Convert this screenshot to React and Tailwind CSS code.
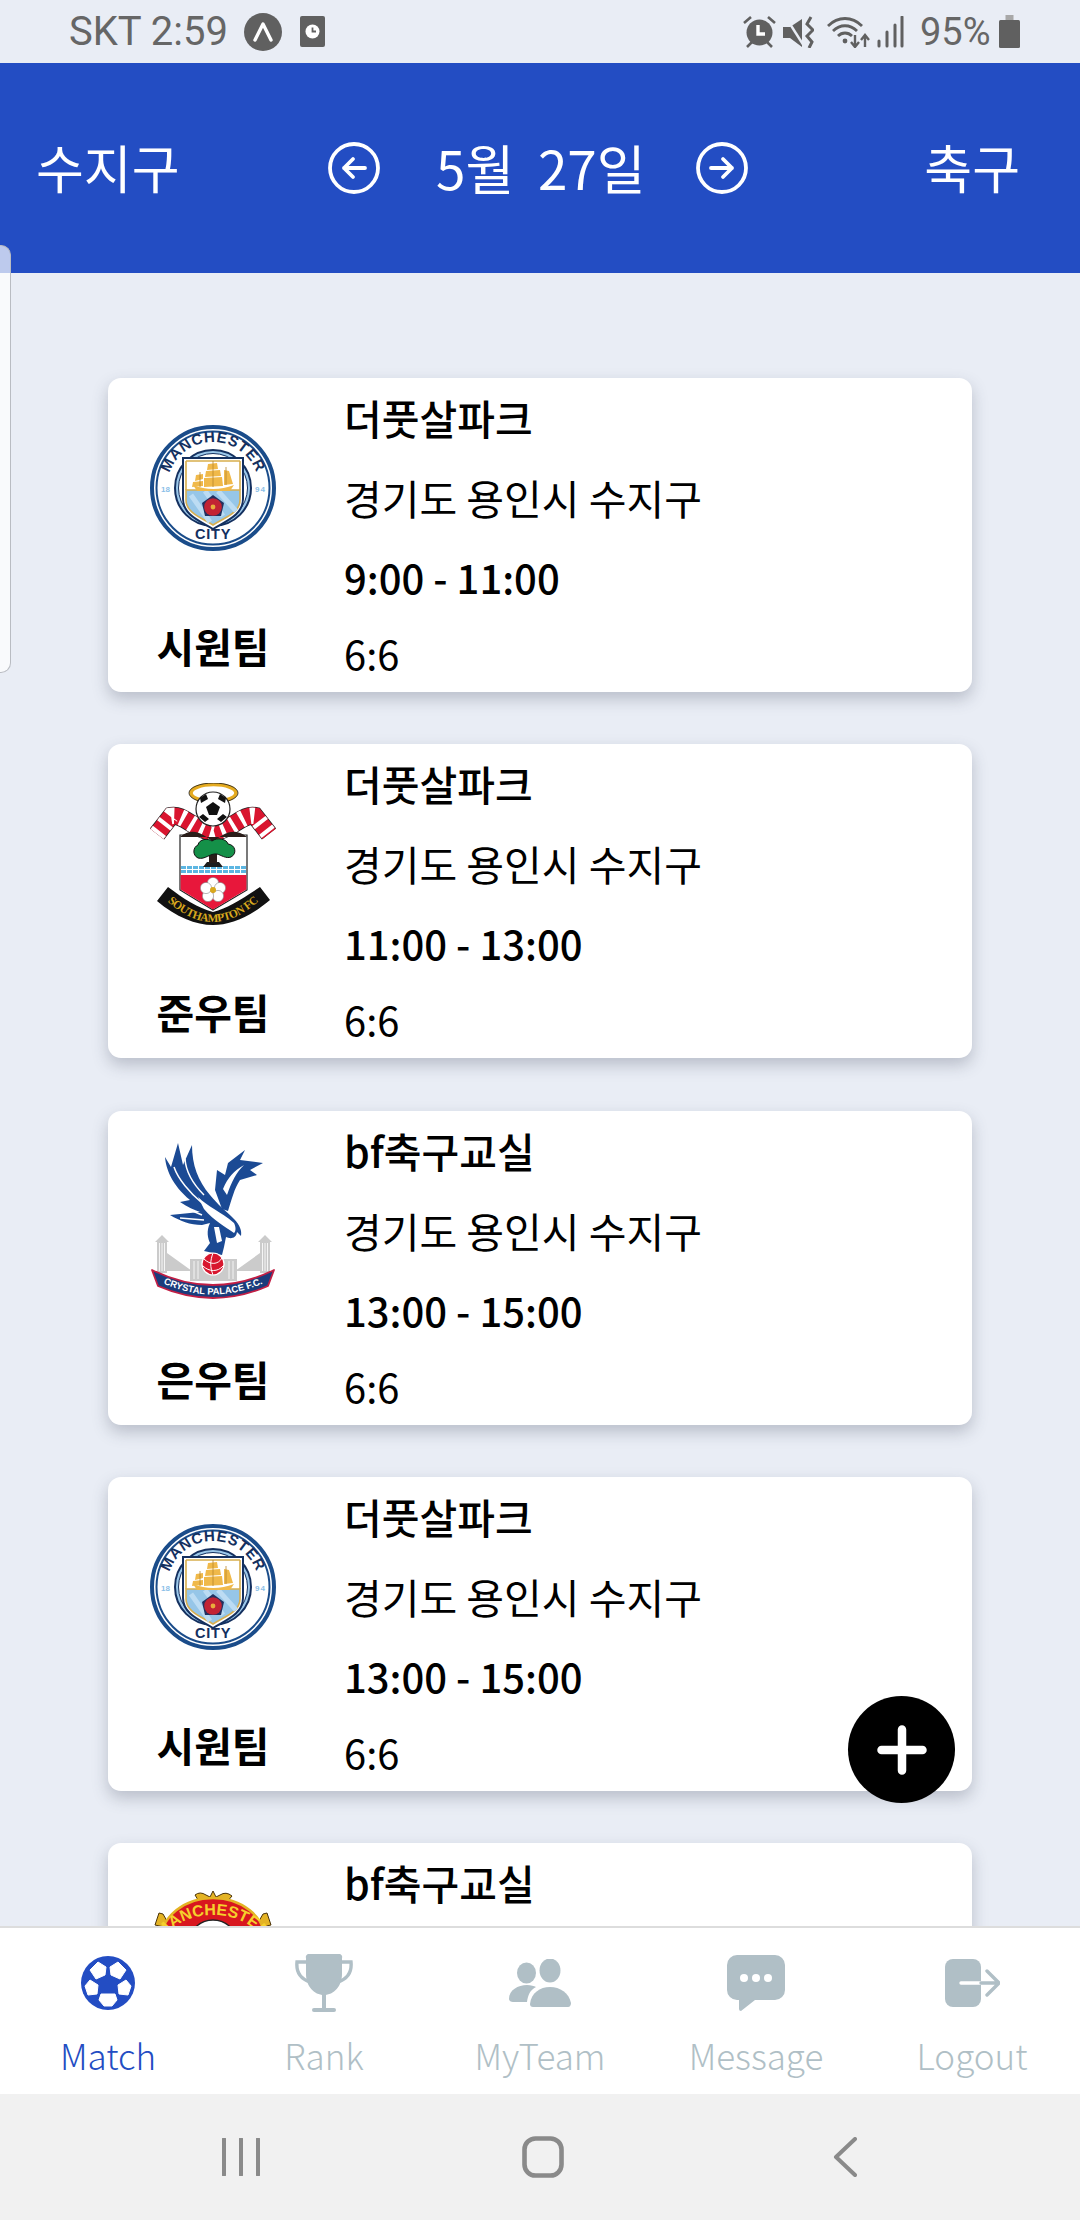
import React from 'react';

const KR = { fontFamily: '"Noto Sans CJK KR", "Noto Sans", sans-serif' };

const matches = [
  { place: '더풋살파크', time: '9:00 - 11:00', team: '시원팀', crest: 'city' },
  { place: '더풋살파크', time: '11:00 - 13:00', team: '준우팀', crest: 'saints' },
  { place: 'bf축구교실', time: '13:00 - 15:00', team: '은우팀', crest: 'palace' },
  { place: '더풋살파크', time: '13:00 - 15:00', team: '시원팀', crest: 'city' },
  // scrolled under the tab bar, only the title shows
  { place: 'bf축구교실', crest: 'united', partial: true },
];

function CityCrest({ id }) {
  return (
    <svg viewBox="0 0 126 130" className="h-[130px] w-[126px]">
      <defs>
        <path id={`${id}-top`} d="M17 65 A46 46 0 0 1 109 65" />
      </defs>
      <circle cx="63" cy="65" r="61" fill="#fff" stroke="#1a4c8a" strokeWidth="4" />
      <circle cx="63" cy="65" r="56.5" fill="none" stroke="#1a4c8a" strokeWidth="2" />
      <circle cx="63" cy="65" r="38" fill="#9cc8ea" stroke="#14305f" strokeWidth="2" />
      <circle cx="63" cy="65" r="34.5" fill="#fff" stroke="#14305f" strokeWidth="1" />
      <text fontSize="15" fontWeight="700" fill="#14305f" fontFamily='"Liberation Sans", sans-serif' letterSpacing="0.8">
        <textPath href={`#${id}-top`} startOffset="50%" textAnchor="middle">MANCHESTER</textPath>
      </text>
      <text x="63" y="116" fontSize="14.5" fontWeight="700" fill="#14305f" textAnchor="middle" fontFamily='"Liberation Sans", sans-serif' letterSpacing="0.8">CITY</text>
      <text x="15.5" y="69" fontSize="8" fontWeight="700" fill="#8cc0e8" textAnchor="middle" fontFamily='"Liberation Sans", sans-serif'>18</text>
      <text x="110.5" y="69" fontSize="8" fontWeight="700" fill="#8cc0e8" textAnchor="middle" fontFamily='"Liberation Sans", sans-serif' letterSpacing="1">94</text>
      <path d="M33 35 H93 V76 C93 92 76 98 63 106 C50 98 33 92 33 76 Z" fill="#fff" stroke="#14305f" strokeWidth="2" />
      <path d="M36 67 H90 V77 C90 90 74 95 63 102 C52 95 36 90 36 77 Z" fill="#96c6e8" stroke="#d8ae4e" strokeWidth="1.6" />
      <path d="M36 38 H90 M36 38 V67 M90 38 V67" stroke="#d8ae4e" strokeWidth="1.6" fill="none" />
      <path d="M55 68 L73 93 M68 68 L86 88 M41 72 L60 99" stroke="#bcdcf3" strokeWidth="5" />
      {/* ship */}
      <g fill="#f0b94a">
        <path d="M43 62 Q63 70 84 62 L80 68 H47 Z" />
        <path d="M58 41 L67 40 L68 46 L57 47 Z" />
        <path d="M56 48 L70 47 L71 53 L55 54 Z" />
        <path d="M54 55 L72 54 L73 63 L54 64 Z" />
        <path d="M46 52 L53 51 V56 L45 58 Z" />
        <path d="M43 59 L53 58 V63 L42 64 Z" />
        <path d="M74 47 L79 48 L83 61 L74 62 Z" />
      </g>
      <path d="M63 38 V64 M50 49 V64 M76 44 V62" stroke="#b8862c" strokeWidth="0.8" />
      {/* rose */}
      <path d="M63 72 L74 80 L71 93 H55 L52 80 Z" fill="#22305f" />
      <circle cx="63" cy="84" r="8.8" fill="#c22334" />
      <circle cx="63" cy="84" r="2.4" fill="#e9ad3c" />
    </svg>
  );
}

function SaintsCrest({ id }) {
  const scarf = 'M7 51 L21 33 C34 31 40 44 63 50 C86 44 92 31 105 33 L119 51';
  return (
    <svg viewBox="0 0 126 142" className="h-[142px] w-[126px]">
      <defs>
        <path id={`${id}-band`} d="M12 113 Q63 165 114 113" />
      </defs>
      <ellipse cx="63.5" cy="10" rx="22.5" ry="8.5" fill="none" stroke="#e5ab20" strokeWidth="3.6" />
      <ellipse cx="63.5" cy="10" rx="24.5" ry="10" fill="none" stroke="#1a1a1a" strokeWidth="0.8" />
      {/* shield */}
      <path d="M30 52 H97 V107 L63 127 L30 107 Z" fill="#fff" stroke="#222" strokeWidth="1.2" />
      <path d="M30.6 92 H96.4 V106.6 L63 126.4 L30.6 106.6 Z" fill="#e8173b" />
      <path d="M31 84.5 H96 M31 88.5 H96" stroke="#5cb6e2" strokeWidth="2.8" strokeDasharray="5 1" />
      {/* scarf */}
      <path d={scarf} fill="none" stroke="#222" strokeWidth="18" />
      <path d={scarf} fill="none" stroke="#d9152f" strokeWidth="16.5" />
      <path d={scarf} fill="none" stroke="#fff" strokeWidth="16.5" strokeDasharray="4 7" />
      <path d="M30 54 C42 44 52 50 63 59 C74 50 84 44 97 54 Z" fill="#2a1d19" />
      {/* ball */}
      <circle cx="63" cy="26" r="17" fill="#fff" stroke="#222" strokeWidth="1.2" />
      <path d="M63 19 L70 24 L67 32 H59 L56 24 Z" fill="#111" />
      <path d="M50 15 L56 11 L58 16 L51 20 Z M76 15 L70 11 L68 16 L75 20 Z M49 34 L55 39 L59 36 L53 31 Z M77 34 L71 39 L67 36 L73 31 Z" fill="#111" />
      {/* tree */}
      <path d="M57 79 H69 L73 84 H53 Z" fill="#1d1d1d" />
      <path d="M59 68 H67 V80 H59 Z" fill="#2a1d19" />
      <path d="M48 75 C42 72 43 64 48 62 C49 56 58 55 62 58 C67 54 77 56 78 61 C86 62 87 71 81 74 C76 76 71 72 67 71 C60 70 55 77 48 75 Z" fill="#149048" stroke="#111" strokeWidth="1" />
      {/* rose */}
      <g fill="#fff" stroke="#888" strokeWidth="0.6">
        <circle cx="63" cy="100" r="5.6" />
        <circle cx="70" cy="105" r="5.6" />
        <circle cx="68" cy="113" r="5.6" />
        <circle cx="58" cy="113" r="5.6" />
        <circle cx="56" cy="105" r="5.6" />
      </g>
      <circle cx="63" cy="107" r="3" fill="#d9a91d" />
      {/* banner */}
      <path d="M7 118 L18 104 C34 116 48 125 63 129 C78 125 92 116 110 104 L120 117 C100 134 80 142 63 142 C46 142 26 134 7 118 Z" fill="#111" />
      <text fontSize="11.5" fontWeight="700" fill="#d9a91d" fontFamily='"Liberation Serif", serif' letterSpacing="-0.5">
        <textPath href={`#${id}-band`} startOffset="50%" textAnchor="middle">SOUTHAMPTON FC</textPath>
      </text>
    </svg>
  );
}

function PalaceCrest({ id }) {
  return (
    <svg viewBox="0 0 126 156" className="h-[156px] w-[126px]">
      <defs>
        <path id={`${id}-band`} d="M8 138 Q63 165 118 138" />
      </defs>
      {/* towers and stadium */}
      <g fill="#cbcbcb">
        <path d="M7 98 H17 V130 H7 Z M110 98 H120 V130 H110 Z" />
        <path d="M12 92 L19 99 H5 Z M115 92 L122 99 H108 Z" />
        <path d="M17 110 L42 128 H17 Z M110 110 L85 128 H110 Z" />
        <path d="M40 116 H87 V138 H40 Z" />
      </g>
      <path d="M9.5 100 V128 M12 100 V128 M14.5 100 V128 M112.5 100 V128 M115 100 V128 M117.5 100 V128 M44 118 V136 M48 118 V136 M79 118 V136 M83 118 V136" stroke="#fff" strokeWidth="0.8" />
      {/* eagle */}
      <g fill="#1b4a94">
        <path d="M15 14 C16 26 22 42 40 57 L30 59 C38 64 44 67 50 69 L20 72 C30 78 40 82 52 82 L60 80 C56 88 58 96 60 100 L54 108 L72 112 L74 104 L76 94 C80 96 86 96 87 89 L91 93 C92 88 90 82 84 76 C76 68 68 62 60 52 C48 38 42 22 42 2 L33 22 L28 0 L21 24 Z" />
        <path d="M72 66 L65 47 L67 27 L75 32 L78 20 L95 7 L90 17 L113 20 L100 27 L107 32 L90 37 C84 46 82 56 78 68 Z" />
      </g>
      <path d="M24 24 C28 36 40 50 52 60 M35 16 C36 30 44 42 54 52 M33 64 L52 72 M30 75 L54 77" fill="none" stroke="#fff" strokeWidth="1.5" />
      <path d="M48 54 C58 64 70 68 84 80 C86 84 86 88 84 90 C76 84 64 78 54 66 Z" fill="#fff" />
      <path d="M73 46 C78 34 84 28 94 22 C86 30 82 38 77 52 Z" fill="#fff" />
      <path d="M64 84 L69 84 L72 98 L67 100 Z" fill="#fff" />
      {/* ball */}
      <circle cx="63" cy="121" r="11" fill="#d8162e" stroke="#fff" strokeWidth="1.2" />
      <path d="M54 116 C60 122 68 122 72 115 M53 123 C59 129 68 129 73 123 M63 110 C60 118 60 124 63 132" stroke="#fff" strokeWidth="1" fill="none" />
      {/* banner */}
      <path d="M2 127 Q63 157 124 127 L118 143 Q63 167 8 143 Z" fill="#1b3c7c" stroke="#c21f45" strokeWidth="1.8" strokeLinejoin="round" />
      <text fontSize="9.4" fontWeight="700" fill="#fff" fontFamily='"Liberation Sans", sans-serif'>
        <textPath href={`#${id}-band`} startOffset="50%" textAnchor="middle">CRYSTAL PALACE F.C.</textPath>
      </text>
    </svg>
  );
}

function UnitedCrest({ id }) {
  return (
    <svg viewBox="0 0 118 140" className="h-[140px] w-[118px]">
      <defs>
        <path id={`${id}-top`} d="M6 70 A53 38 0 0 1 112 70" />
      </defs>
      <path d="M41 12 Q46 8 52 12 L56 14 L59 8 L62 14 L66 12 Q72 8 78 13 L72 20 H46 Z" fill="#e4b324" stroke="#4a3208" strokeWidth="1" />
      <path d="M1 42 L5 30 L9 31 L13 38 L10 44 Z M117 42 L113 30 L109 31 L105 38 L108 44 Z" fill="#e4b324" stroke="#4a3208" strokeWidth="1" />
      <path d="M7 70 V57 A52 42 0 0 1 111 57 V70 Z" fill="#d8171f" stroke="#e4b324" strokeWidth="2.4" />
      <ellipse cx="59" cy="60" rx="24" ry="23" fill="#fff" stroke="#222" strokeWidth="1.4" />
      <text fontSize="16" fontWeight="700" fill="#f5d02c" fontFamily='"Liberation Sans", sans-serif'>
        <textPath href={`#${id}-top`} startOffset="50%" textAnchor="middle">MANCHESTER</textPath>
      </text>
    </svg>
  );
}

const crests = { city: CityCrest, saints: SaintsCrest, palace: PalaceCrest, united: UnitedCrest };

function MatchCard({ match, index }) {
  const Crest = crests[match.crest];
  return (
    <div className="flex h-[314px] shrink-0 rounded-[13px] bg-white shadow-[0_7px_16px_rgba(60,70,90,0.28)]">
      <div className="flex w-[210px] shrink-0 flex-col items-center">
        <div className="mt-[30px] flex h-[160px] items-center justify-center">
          <Crest id={`crest-${index}`} />
        </div>
        {!match.partial && <div className="mt-[49px] text-[41px] font-bold leading-[56px] text-black">{match.team}</div>}
      </div>
      <div className="ml-[26px] flex flex-col text-black">
        <div className="h-[81px] text-[41px] font-medium leading-[78px]">{match.place}</div>
        {!match.partial && (
          <>
            <div className="h-[77px] text-[41px] leading-[77px]">경기도 용인시 수지구</div>
            <div className="h-[83px] text-[40px] font-medium leading-[83px]">{match.time}</div>
            <div className="h-[69px] text-[40px] leading-[69px]">6:6</div>
          </>
        )}
      </div>
    </div>
  );
}

function StatusBar() {
  return (
    <div className="flex h-[63px] shrink-0 items-center justify-between pl-[69px] pr-[60px] text-[#666666]" style={{ fontFamily: 'Roboto, sans-serif' }}>
      <div className="flex items-center">
        <span className="w-[175px] text-[40px] leading-none">SKT 2:59</span>
        <svg viewBox="0 0 38 38" className="h-[38px] w-[38px]">
          <circle cx="19" cy="19" r="19" fill="#606060" />
          <path d="M11 27 L19 11 L27 27" fill="none" stroke="#fff" strokeWidth="3.4" strokeLinecap="round" strokeLinejoin="round" />
        </svg>
        <svg viewBox="0 0 25 31" className="ml-[18px] h-[31px] w-[25px]">
          <rect width="25" height="31" rx="2" fill="#606060" />
          <circle cx="12.5" cy="15.5" r="7" fill="#fff" />
          <path d="M12.5 11.5 V15.5 H16" stroke="#606060" strokeWidth="1.8" fill="none" />
        </svg>
      </div>
      <div className="flex items-center">
        <svg viewBox="0 0 33 32" className="h-[32px] w-[33px]">
          <circle cx="16.5" cy="16.5" r="13" fill="#606060" />
          <path d="M15 9 V18 H22" stroke="#fff" strokeWidth="3.4" fill="none" />
          <path d="M1 7 L8 1 M32 7 L25 1 M4 31 L9 26 M29 31 L24 26" stroke="#606060" strokeWidth="2.6" />
        </svg>
        <svg viewBox="0 0 31 32" className="ml-[7px] h-[32px] w-[31px]">
          <path d="M0 11 H7 L19 3 V31 L7 22 H0 Z" fill="#606060" />
          <path d="M2 0 L21 30" stroke="#e9edf5" strokeWidth="2.4" />
          <path d="M28 1 L24 8 L30 14 L24 20 L29 26 L26 32" fill="none" stroke="#606060" strokeWidth="3" />
        </svg>
        <svg viewBox="0 0 43 32" className="ml-[13px] h-[32px] w-[43px]">
          <path d="M1 10 C11 0 25 0 35 10 M6 15 C13 8 23 8 30 15 M11 20 C15 16 21 16 25 20" fill="none" stroke="#606060" strokeWidth="2.8" />
          <circle cx="18" cy="25" r="2.4" fill="#606060" />
          <path d="M28 19 V31 M24 26 L28 31 L32 26 M38 31 V19 M34 24 L38 19 L42 24" fill="none" stroke="#606060" strokeWidth="2.4" />
        </svg>
        <svg viewBox="0 0 27 32" className="ml-[7px] h-[32px] w-[27px]">
          <path d="M2 25 V30 M10 16 V30 M18 9 V30 M25 1 V30" stroke="#606060" strokeWidth="3" strokeLinecap="round" />
        </svg>
        <span className="ml-[16px] w-[68px] whitespace-nowrap text-[38px] leading-none">95%</span>
        <svg viewBox="0 0 21 33" className="ml-[11px] h-[33px] w-[21px]">
          <rect x="6.5" y="0" width="8" height="6" fill="#a8a8a8" />
          <rect x="0" y="5" width="21" height="28" rx="1.5" fill="#606060" />
        </svg>
      </div>
    </div>
  );
}

function RoundArrow({ dir }) {
  return (
    <svg viewBox="0 0 52 52" className="h-[52px] w-[52px]">
      <circle cx="26" cy="26" r="24" fill="none" stroke="#fff" strokeWidth="3.8" />
      {dir === 'left' ? (
        <path d="M37 26 H16 M25 17 L16 26 L25 35" fill="none" stroke="#fff" strokeWidth="3.8" strokeLinecap="round" strokeLinejoin="round" />
      ) : (
        <path d="M15 26 H36 M27 17 L36 26 L27 35" fill="none" stroke="#fff" strokeWidth="3.8" strokeLinecap="round" strokeLinejoin="round" />
      )}
    </svg>
  );
}

function Header() {
  return (
    <div className="flex h-[210px] shrink-0 items-center bg-[#234dc3] text-white">
      <div className="ml-[36px] w-[292px] pb-[2px] text-[52px] leading-none">수지구</div>
      <RoundArrow dir="left" />
      <div className="ml-[56px] w-[260px] whitespace-pre pb-[2px] text-[53px] leading-none">5월  27일</div>
      <RoundArrow dir="right" />
      <div className="ml-auto mr-[60px] pb-[2px] text-[52px] leading-none">축구</div>
    </div>
  );
}

const FOOT = '#b0bfc6';

const tabs = [
  {
    label: 'Match',
    active: true,
    icon: (
      <svg viewBox="0 0 54 54" className="h-[54px] w-[54px]">
        <circle cx="27" cy="27" r="27" fill="#234dc3" />
        <g fill="#fff" stroke="#fff" strokeWidth="1" strokeLinejoin="round">
          <path d="M17 6 L25 11 L24 19 L15 23 L9 14 Z" />
          <path d="M37 6 L29 11 L30 19 L39 23 L45 14 Z" />
          <path d="M9 24 L17 29 L16 38 L7 39 L4 30 Z" />
          <path d="M45 24 L37 29 L38 38 L47 39 L50 30 Z" />
          <path d="M20 38 H34 L36 44 L31 50 H23 L18 44 Z" />
        </g>
      </svg>
    ),
  },
  {
    label: 'Rank',
    icon: (
      <svg viewBox="0 0 58 58" className="h-[58px] w-[58px]">
        <g fill={FOOT}>
          <path d="M11 4 A3 3 0 0 1 14 0 H44 A3 3 0 0 1 47 4 V20 C47 32 39 41 29 41 C19 41 11 32 11 20 Z" />
          <rect x="27" y="40" width="4" height="15" />
          <rect x="17" y="54" width="24" height="4" rx="2" />
        </g>
        <path d="M12 8 H2 C1 18 6 25 15 28 M46 8 H56 C57 18 52 25 43 28" fill="none" stroke={FOOT} strokeWidth="3.4" strokeLinecap="round" />
      </svg>
    ),
  },
  {
    label: 'MyTeam',
    icon: (
      <svg viewBox="0 0 62 48" className="h-[48px] w-[62px]">
        <g fill={FOOT}>
          <ellipse cx="17.5" cy="14" rx="9.5" ry="10.5" />
          <ellipse cx="41" cy="11.5" rx="10.5" ry="12" />
          <path d="M0 40 C0 31 9 26 18 26 C22 26 25 27 27 28 C21 31 19 36 18 43 H4 C2 43 0 42 0 40 Z" />
          <path d="M21 45 C22 34 31 28 41 28 C51 28 60 34 62 44 C62 46 61 48 59 48 H24 C22 48 21 47 21 45 Z" />
        </g>
      </svg>
    ),
  },
  {
    label: 'Message',
    icon: (
      <svg viewBox="0 0 58 56" className="h-[56px] w-[58px]">
        <path d="M10 0 H48 A10 10 0 0 1 58 10 V35 A10 10 0 0 1 48 45 H28 L14 56 Q12 56 12 54 V45 H10 A10 10 0 0 1 0 35 V10 A10 10 0 0 1 10 0 Z" fill={FOOT} />
        <circle cx="17" cy="23" r="4" fill="#fff" />
        <circle cx="29" cy="23" r="4" fill="#fff" />
        <circle cx="41" cy="23" r="4" fill="#fff" />
      </svg>
    ),
  },
  {
    label: 'Logout',
    icon: (
      <svg viewBox="0 0 55 48" className="h-[48px] w-[55px]">
        <rect x="0" y="0" width="36" height="48" rx="8" fill={FOOT} />
        <path d="M16 24 H36" stroke="#fff" strokeWidth="3.4" strokeLinecap="round" />
        <path d="M36 24 H52 M42 12 L54 24 L42 36" fill="none" stroke={FOOT} strokeWidth="3.4" strokeLinecap="round" strokeLinejoin="round" />
      </svg>
    ),
  },
];

function TabBar() {
  return (
    <div className="z-10 grid h-[168px] shrink-0 grid-cols-5 border-t-2 border-[#dddddd] bg-white">
      {tabs.map((tab) => (
        <div key={tab.label} className="flex flex-col items-center">
          <div className="mt-[25px] flex h-[60px] items-center justify-center">{tab.icon}</div>
          <div className={`mt-[17px] text-[35px] font-light leading-[50px] ${tab.active ? 'text-[#234dc3]' : 'text-[#b0bfc6]'}`}>{tab.label}</div>
        </div>
      ))}
    </div>
  );
}

function NavBar() {
  return (
    <div className="flex h-[126px] shrink-0 items-center bg-[#f1f1f1]">
      <svg viewBox="0 0 38 38" className="ml-[222px] h-[38px] w-[38px]">
        <path d="M2 1 V37 M19 1 V37 M36 1 V37" stroke="#8a8a8a" strokeWidth="4" strokeLinecap="round" />
      </svg>
      <svg viewBox="0 0 42 42" className="ml-[262px] h-[42px] w-[42px]">
        <rect x="2.5" y="2.5" width="37" height="37" rx="11" fill="none" stroke="#8a8a8a" strokeWidth="4.6" />
      </svg>
      <svg viewBox="0 0 24 40" className="ml-[269px] h-[40px] w-[24px]">
        <path d="M22 2 L3 20 L22 38" fill="none" stroke="#8a8a8a" strokeWidth="4" strokeLinecap="round" strokeLinejoin="round" />
      </svg>
    </div>
  );
}

export default function App() {
  return (
    <div className="relative flex h-[2220px] w-[1080px] flex-col overflow-hidden bg-[#e9edf5]" style={KR}>
      <StatusBar />
      <Header />
      <div className="flex min-h-0 flex-1 flex-col gap-[52.25px] overflow-hidden px-[108px] pt-[105px]">
        {matches.map((match, i) => (
          <MatchCard key={i} match={match} index={i} />
        ))}
      </div>
      <TabBar />
      <NavBar />

      {/* left drawer handle */}
      <div className="absolute left-0 top-[245px] h-[428px] w-[11px] rounded-r-[10px] border border-l-0 border-[#b9bcc2] bg-white/70" />

      {/* add button */}
      <div className="absolute left-[848px] top-[1696px] flex h-[107px] w-[107px] items-center justify-center rounded-full bg-black">
        <svg viewBox="0 0 50 50" className="h-[50px] w-[50px]">
          <path d="M4.5 25 H45.5 M25 4.5 V45.5" stroke="#fff" strokeWidth="8.5" strokeLinecap="round" />
        </svg>
      </div>
    </div>
  );
}
